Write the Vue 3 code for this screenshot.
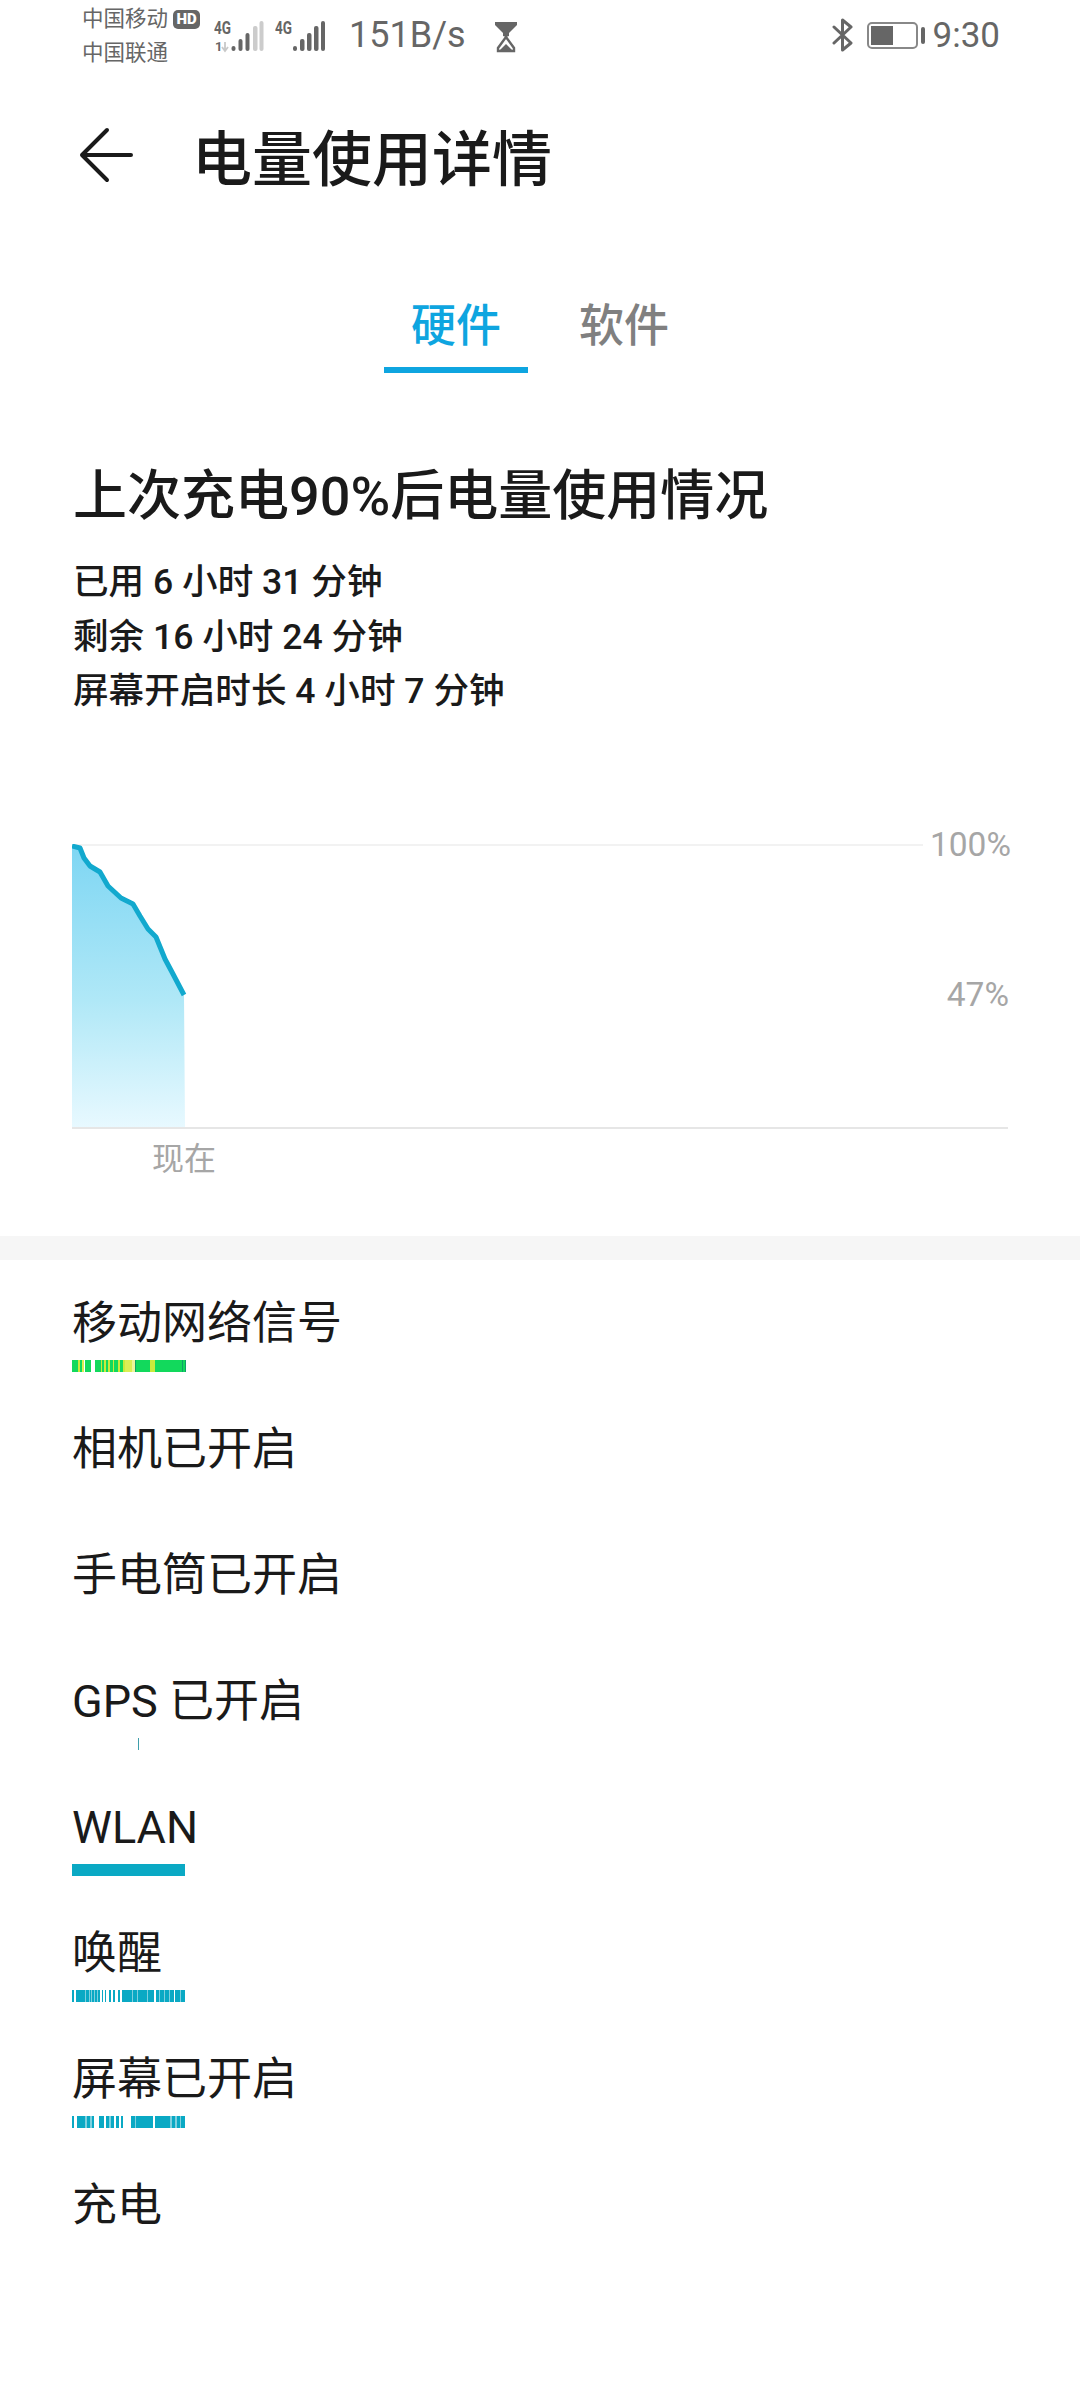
<template>
  <div class="page">
    <!-- status bar -->
    <div class="status">
      <div class="carriers">
        <div class="carrier">中国移动<span class="hd">HD</span></div>
        <div class="carrier">中国联通</div>
      </div>
      <svg class="signal" width="52" height="40" viewBox="0 -6 52 40">
        <text x="0" y="13" class="net" textLength="17" lengthAdjust="spacingAndGlyphs">4G</text>
        <text x="1" y="30" class="net small">1</text>
        <path d="M11 21v9M8 26l3 4 3-4" stroke="#c8c8c8" stroke-width="1.800" fill="none" />
        <rect x="17.500" y="25" width="4" height="5" rx="2" fill="#666" />
        <rect x="24.500" y="18" width="4" height="12" rx="2" fill="#666" />
        <rect x="31.500" y="12" width="4" height="18" rx="2" fill="#666" />
        <rect x="39" y="5" width="4.500" height="25" rx="2" fill="#ccc" />
        <rect x="45.500" y="0" width="4" height="30" rx="2" fill="#ccc" />
      </svg>
      <svg class="signal second" width="50" height="40" viewBox="0 -6 50 40">
        <text x="0" y="13" class="net" textLength="17" lengthAdjust="spacingAndGlyphs">4G</text>
        <rect x="18" y="25" width="4" height="5" rx="2" fill="#666" />
        <rect x="25" y="18" width="4.500" height="12" rx="2" fill="#666" />
        <rect x="32" y="12" width="4.500" height="18" rx="2" fill="#666" />
        <rect x="39" y="5" width="4.500" height="25" rx="2" fill="#666" />
        <rect x="46" y="0" width="4" height="30" rx="2" fill="#666" />
      </svg>
      <span class="speed">151B/s</span>
      <svg class="hourglass" width="24" height="32" viewBox="0 0 24 32">
        <path d="M1 1h22v3l-8 8v3l-3 1-3-1v-3L1 4z" fill="#666" />
        <path d="M12 16l8 11v3H4v-3z" fill="none" stroke="#666" stroke-width="2.400" />
        <path d="M12 23l8 8H4z" fill="#666" />
      </svg>
      <div class="status-right">
        <svg class="bluetooth" width="22" height="34" viewBox="0 0 22 34">
          <path d="M2 9l17 16-8.500 7V2l8.500 7L2 25" fill="none" stroke="#666" stroke-width="3" stroke-linejoin="round" stroke-linecap="round" />
        </svg>
        <div class="battery">
          <div class="battery-body"><div class="battery-fill"></div></div>
          <div class="battery-nub"></div>
        </div>
        <span class="clock">9:30</span>
      </div>
    </div>

    <!-- title row -->
    <div class="nav">
      <svg class="back" width="56" height="56" viewBox="0 0 56 56">
        <path d="M28 3L3 28l25 25M3 28h49" fill="none" stroke="#1a1a1a" stroke-width="4" stroke-linecap="round" stroke-linejoin="round" />
      </svg>
      <h1 class="title">电量使用详情</h1>
    </div>

    <!-- tabs -->
    <div class="tabs">
      <div class="tab active">硬件</div>
      <div class="tab">软件</div>
    </div>

    <!-- summary -->
    <section class="summary">
      <h2>上次充电90%后电量使用情况</h2>
      <p v-for="line in summary" :key="line">{{ line }}</p>
    </section>

    <!-- battery curve -->
    <div class="chart">
      <svg class="curve" width="938" height="286" viewBox="0 0 938 286">
        <defs>
          <linearGradient id="curveFill" x1="0" y1="0" x2="0" y2="1">
            <stop offset="0" stop-color="#7ed6f3" />
            <stop offset="0.55" stop-color="#b0e8f7" />
            <stop offset="1" stop-color="#e8f9ff" />
          </linearGradient>
        </defs>
        <line x1="0" y1="1" x2="851" y2="1" stroke="#f2f2f2" stroke-width="2" />
        <path :d="curve + ' L113 284 L0 284 Z'" fill="url(#curveFill)" />
        <path :d="curve" fill="none" stroke="#12a9ce" stroke-width="5" stroke-linejoin="round" />
        <line x1="0" y1="284" x2="936" y2="284" stroke="#e6e6e6" stroke-width="2" />
      </svg>
      <span class="pct top">100%</span>
      <span class="pct mid">47%</span>
      <span class="now">现在</span>
    </div>

    <div class="band"></div>

    <!-- hardware usage rows -->
    <ul class="rows">
      <li v-for="row in rows" :key="row.name" class="row">
        <div class="row-name">{{ row.name }}</div>
        <div class="track">
          <span
            v-for="(seg, i) in row.segments"
            :key="i"
            class="seg"
            :style="{ width: seg[0] + 'px', background: seg[1] }"
          ></span>
        </div>
      </li>
    </ul>
  </div>
</template>

<script setup>
const summary = [
  "已用 6 小时 31 分钟",
  "剩余 16 小时 24 分钟",
  "屏幕开启时长 4 小时 7 分钟"
];

const curve =
  "M0 2 L8 4 L12 14 L18 22 L28 28 L36 42 L49 54 L61 60 L68 72 L76 85 L84 93 L93 115 L101 130 L112 151";

const G = "#12d95c";
const Y = "#c9ea3c";
const P = "#dcee55";
const D = "#0f9f6a";
const T = "#0aa9c4";
const L = "#7fd0df";
const W = "#ffffff";

const mobile = [
  [6, G], [2, Y], [2, G], [2, P], [1, W], [6, G], [4, W], [6, G], [1, Y], [2, G], [2, Y],
  [2, G], [2, Y], [3, G], [1, Y], [4, G], [2, Y], [3, G], [2, Y], [7, P], [3, "#eef59a"],
  [1, D], [14, G], [5, Y], [2, G], [25, G], [1, D], [2, G], [1, D]
];
const wake = [
  [2, T], [2, W], [9, T], [1, L], [3, T], [1, L], [1, T], [1, L], [2, T], [1, L], [2, T],
  [1, L], [2, T], [2, W], [1, T], [2, W], [1, T], [3, W], [2, T], [2, W], [2, T], [3, W],
  [2, T], [2, W], [10, T], [1, L], [4, T], [1, L], [9, T], [1, L], [6, T], [2, W], [3, T],
  [1, L], [4, T], [1, L], [4, T], [1, L], [4, T], [1, W], [5, T], [1, L], [4, T]
];
const screen = [
  [2, T], [3, W], [8, T], [2, L], [3, T], [2, L], [2, T], [5, W], [5, T], [2, W], [3, T],
  [2, L], [3, T], [2, W], [3, T], [2, W], [2, T], [8, W], [4, T], [1, L], [17, T], [2, W],
  [15, T], [2, L], [3, T], [2, L], [3, T], [1, L], [4, T]
];

const rows = [
  { name: "移动网络信号", segments: mobile },
  { name: "相机已开启", segments: [] },
  { name: "手电筒已开启", segments: [] },
  { name: "GPS 已开启", segments: [[66, W], [1, "#3f9eab"]] },
  { name: "WLAN", segments: [[113, T]] },
  { name: "唤醒", segments: wake },
  { name: "屏幕已开启", segments: screen },
  { name: "充电", segments: [] }
];
</script>

<style>
body {
  background: #fff;
}
</style>

<style scoped>
.page {
  width: 1080px;
  height: 2400px;
  overflow: hidden;
  background: #fff;
  font-family: Roboto, "Noto Sans CJK SC", sans-serif;
  color: #1a1a1a;
}

.status {
  height: 70px;
  display: flex;
  align-items: center;
  padding-left: 82px;
  padding-right: 80px;
  color: #666;
}
.carriers {
  flex: none;
  width: 131.500px;
  margin-top: 2px;
  font-size: 21.500px;
  line-height: 34px;
}
.carrier {
  display: flex;
  align-items: center;
  height: 34px;
}
.hd {
  margin-left: 5px;
  width: 27px;
  height: 19px;
  border-radius: 5px;
  background: #666;
  color: #fff;
  font-size: 15px;
  font-weight: 900;
  line-height: 19px;
  text-align: center;
}
.signal {
  flex: none;
}
.signal.second {
  margin-left: 9.500px;
}
.net {
  font-family: Roboto, sans-serif;
  font-size: 19px;
  font-weight: 700;
  fill: #666;
}
.net.small {
  font-size: 13px;
}
.speed {
  margin-left: 24px;
  font-size: 36px;
}
.hourglass {
  flex: none;
  margin-left: 28px;
  margin-top: 4px;
}
.status-right {
  margin-left: auto;
  display: flex;
  align-items: center;
}
.battery {
  display: flex;
  align-items: center;
  gap: 3px;
  margin-left: 13px;
}
.battery-body {
  width: 51px;
  height: 27px;
  box-sizing: border-box;
  border: 2px solid #888;
  border-radius: 5px;
  padding: 2px;
}
.battery-fill {
  width: 22px;
  height: 100%;
  background: #666;
}
.battery-nub {
  width: 4px;
  height: 17px;
  border-radius: 2px;
  background: #666;
}
.clock {
  margin-left: 8px;
  font-size: 35px;
}

.nav {
  height: 170px;
  display: flex;
  align-items: center;
  padding-left: 79px;
}
.back {
  flex: none;
}
.title {
  margin: -2px 0 0 57px;
  font-size: 60px;
  font-weight: 500;
}

.tabs {
  display: flex;
  justify-content: center;
  gap: 52px;
  margin-top: 45px;
}
.tab {
  width: 144px;
  margin: 0 -14px;
  height: 88px;
  box-sizing: border-box;
  padding-top: 12px;
  text-align: center;
  font-size: 45px;
  line-height: 60px;
  color: #808080;
  font-weight: 500;
}
.tab.active {
  color: #0ea5e0;
  border-bottom: 6px solid #0ea5e0;
}

.summary {
  padding-left: 73px;
  margin-top: 86px;
}
.summary h2 {
  margin: 0 0 20px;
  font-size: 54px;
  font-weight: 500;
  line-height: 76px;
}
.summary p {
  margin: 0;
  font-size: 35.600px;
  font-weight: 500;
  line-height: 54.500px;
}

.chart {
  position: relative;
  height: 391.500px;
  margin-top: 125.500px;
  margin-left: 72px;
}
.curve {
  display: block;
}
.pct {
  position: absolute;
  right: 69px;
  font-size: 33.500px;
  line-height: 40px;
  color: #a6a6a6;
}
.pct.top {
  top: -19px;
}
.pct.mid {
  top: 131px;
  right: 71px;
}
.now {
  position: absolute;
  left: 80px;
  top: 293px;
  font-size: 32px;
  line-height: 44px;
  color: #a6a6a6;
}

.band {
  height: 24px;
  background: #f6f6f6;
}

.rows {
  margin: 0;
  padding: 0 0 0 72px;
  list-style: none;
}
.row {
  height: 126px;
  box-sizing: border-box;
  padding-top: 24px;
}
.row-name {
  height: 76px;
  font-size: 45px;
  line-height: 80px;
}
.track {
  display: flex;
  width: 113px;
  height: 12px;
}
.seg {
  flex: none;
  height: 100%;
}
</style>
